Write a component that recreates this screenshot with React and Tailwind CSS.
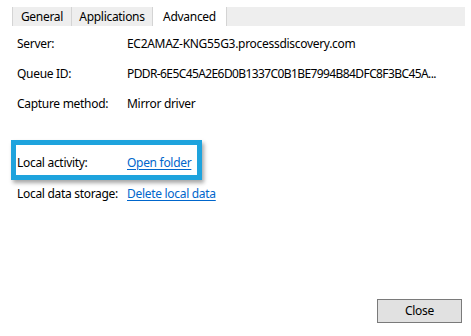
export default function App() {
  const font = { fontFamily: '"Segoe UI", "Noto Sans", "Liberation Sans", sans-serif' };
  return (
    <div className="relative w-[471px] h-[336px] bg-white text-[12px] tracking-[-0.3px] text-black overflow-hidden" style={font}>
      <div className="pt-[7px] pl-[12px]">
        <div className="flex w-[453px] h-[19px] bg-[#eeeeee] border-l border-[#d4d4d4]">
          <div className="w-[59px] flex items-center justify-center border-r border-[#d4d4d4] leading-none">General</div>
          <div className="w-[81px] flex items-center justify-center border-r border-[#d4d4d4] leading-none">Applications</div>
          <div className="w-[74px] flex items-center justify-center bg-white border-r border-[#d4d4d4] leading-none">Advanced</div>
        </div>
      </div>
      <div className="flex flex-col pl-[17px] pt-[10px]">
        <div className="flex h-[16px] items-center">
          <div className="w-[110px]">Server:</div>
          <div>EC2AMAZ-KNG55G3.processdiscovery.com</div>
        </div>
        <div className="flex h-[16px] items-center mt-[14px]">
          <div className="w-[110px]">Queue ID:</div>
          <div className="tracking-[-0.6px]">PDDR-6E5C45A2E6D0B1337C0B1BE7994B84DFC8F3BC45A...</div>
        </div>
        <div className="flex h-[16px] items-center mt-[14px]">
          <div className="w-[110px]">Capture method:</div>
          <div>Mirror driver</div>
        </div>
        <div className="flex h-[16px] items-center mt-[43px]">
          <div className="w-[110px]">Local activity:</div>
          <div className="text-[#0066cc] underline underline-offset-2">Open folder</div>
        </div>
        <div className="flex h-[16px] items-center mt-[15px]">
          <div className="w-[110px]">Local data storage:</div>
          <div className="text-[#0066cc] underline underline-offset-2">Delete local data</div>
        </div>
      </div>
      <div className="absolute left-[11px] top-[140px] w-[191px] h-[40px] border-[5px] border-[#1ea3dd] shadow-[2px_3px_4px_rgba(0,0,0,0.35)]" />
      <button className="absolute left-[377px] top-[299px] w-[85px] h-[24px] bg-[#e1e1e1] border border-[#7a7a7a] text-[12px] leading-none" style={font}>
        Close
      </button>
    </div>
  );
}
